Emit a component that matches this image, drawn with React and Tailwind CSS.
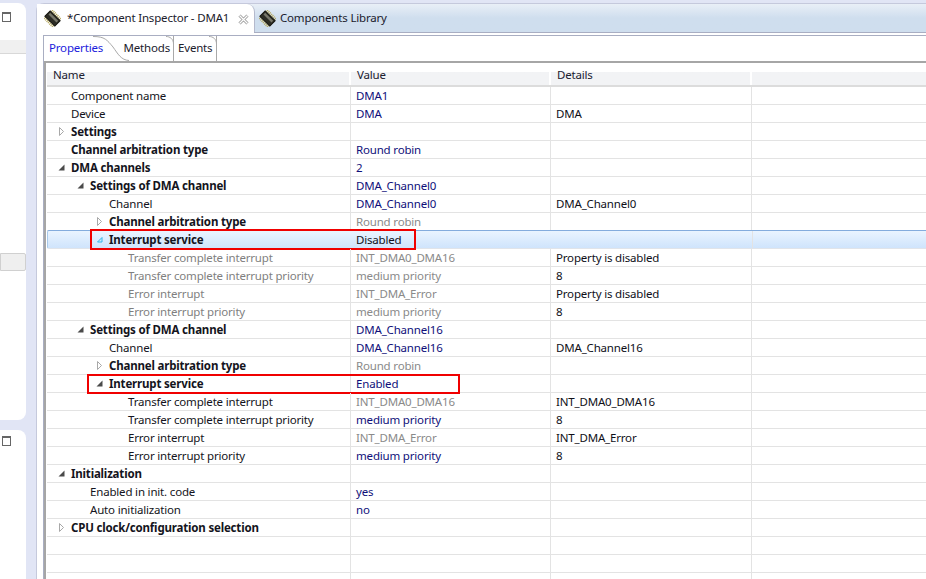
const NAVY = "text-[#10107a]";
const GREY = "text-[#8a8a8a]";
const rows = [
  { n: "Component name", i: 71, v: "DMA1", vc: NAVY },
  { n: "Device", i: 71, v: "DMA", vc: NAVY, d: "DMA" },
  { n: "Settings", i: 71, b: 1, a: "r", ax: 58 },
  { n: "Channel arbitration type", i: 71, b: 1, v: "Round robin", vc: NAVY },
  { n: "DMA channels", i: 71, b: 1, a: "d", ax: 58, v: "2", vc: NAVY },
  { n: "Settings of DMA channel", i: 90, b: 1, a: "d", ax: 77, v: "DMA_Channel0", vc: NAVY },
  { n: "Channel", i: 109, v: "DMA_Channel0", vc: NAVY, d: "DMA_Channel0" },
  { n: "Channel arbitration type", i: 109, b: 1, a: "r", ax: 96, v: "Round robin", vc: GREY },
  { n: "Interrupt service", i: 108, b: 1, a: "s", ax: 95, v: "Disabled", vc: "text-[#101018]", sel: 1, box: "left-[42px] w-[326px] top-[-2px] h-[21px]" },
  { n: "Transfer complete interrupt", i: 128, g: 1, v: "INT_DMA0_DMA16", vc: GREY, d: "Property is disabled" },
  { n: "Transfer complete interrupt priority", i: 128, g: 1, v: "medium priority", vc: GREY, d: "8" },
  { n: "Error interrupt", i: 128, g: 1, v: "INT_DMA_Error", vc: GREY, d: "Property is disabled" },
  { n: "Error interrupt priority", i: 128, g: 1, v: "medium priority", vc: GREY, d: "8" },
  { n: "Settings of DMA channel", i: 90, b: 1, a: "d", ax: 77, v: "DMA_Channel16", vc: NAVY },
  { n: "Channel", i: 109, v: "DMA_Channel16", vc: NAVY, d: "DMA_Channel16" },
  { n: "Channel arbitration type", i: 109, b: 1, a: "r", ax: 96, v: "Round robin", vc: GREY },
  { n: "Interrupt service", i: 109, b: 1, a: "d", ax: 96, v: "Enabled", vc: NAVY, box: "left-[40px] w-[373px] top-[-1px] h-[20px]" },
  { n: "Transfer complete interrupt", i: 128, v: "INT_DMA0_DMA16", vc: GREY, d: "INT_DMA0_DMA16" },
  { n: "Transfer complete interrupt priority", i: 128, v: "medium priority", vc: NAVY, d: "8" },
  { n: "Error interrupt", i: 128, v: "INT_DMA_Error", vc: GREY, d: "INT_DMA_Error" },
  { n: "Error interrupt priority", i: 128, v: "medium priority", vc: NAVY, d: "8" },
  { n: "Initialization", i: 71, b: 1, a: "d", ax: 58 },
  { n: "Enabled in init. code", i: 90, v: "yes", vc: NAVY },
  { n: "Auto initialization", i: 90, v: "no", vc: NAVY },
  { n: "CPU clock/configuration selection", i: 71, b: 1, a: "r", ax: 58 },
  { n: "" },
  { n: "" },
  { n: "" },
];

function Arrow({ kind }) {
  if (kind === "r")
    return (
      <svg width="7" height="9" viewBox="0 0 7 9" className="block">
        <path d="M1.5.5 L1.5 8.5 L5.5 4.5 Z" fill="#fff" stroke="#a8a8a8" />
      </svg>
    );
  return (
    <svg width="7" height="9" viewBox="0 0 7 9" className="block">
      {kind === "s" ? (
        <path d="M6 2.5 L6 7 L1.5 7 Z" fill="#c8ecfb" stroke="#35b4ea" />
      ) : (
        <path d="M6.5 1.5 L6.5 7.5 L.5 7.5 Z" fill="#4a4a4a" />
      )}
    </svg>
  );
}

function Chip() {
  return (
    <svg width="17" height="17" viewBox="0 0 18 18" className="shrink-0">
      <g transform="rotate(45 9 9)">
        <path d="M3 2V16M5 2V16M7 2V16M9 2V16M11 2V16M13 2V16M15 2V16" stroke="#b5a860" strokeWidth="1.1" />
        <rect x="1.5" y="5" width="15" height="8" fill="#2c2c24" stroke="#15150f" />
        <rect x="3" y="6.5" width="12" height="2.5" fill="#77776a" />
      </g>
    </svg>
  );
}

function Corner() {
  return (
    <svg width="8" height="8" viewBox="0 0 8 8" className="absolute right-[-1px] top-0">
      <path d="M0 .5 C4 .5 7.5 3 7.5 8" fill="none" stroke="#a9a9a9" />
    </svg>
  );
}

function Row({ r }) {
  return (
    <div
      className={
        "relative flex shrink-0 " +
        (r.sel
          ? "-mt-px h-[19px] rounded-l-[2px] border-t border-l border-b border-t-[#84acdd] border-l-[#a9c9ea] border-b-[#e0e4ea] bg-gradient-to-b from-[#eaf4ff] to-[#cfe4fc]"
          : "h-[18px] border-b border-[#e3e3e3]")
      }
    >
      <div
        className={
          "relative w-[304px] shrink-0 leading-[17px] whitespace-nowrap " +
          (r.sel ? "" : "border-r border-[#e3e3e3] ") +
          (r.g ? "text-[#7f7f7f] " : "text-[#141420] ") +
          (r.b ? "font-bold" : "")
        }
      >
        {r.a && (
          <span className="absolute top-[4px]" style={{ left: r.ax - 47 }}>
            <Arrow kind={r.a} />
          </span>
        )}
        <span className="block" style={{ paddingLeft: (r.i || 47) - 47 }}>{r.n}</span>
      </div>
      <div className={"w-[200px] shrink-0 leading-[17px] whitespace-nowrap " + (r.sel ? "pl-[4px] " : "pl-[5px] border-r border-[#e3e3e3] ") + (r.vc || "")}>
        {r.v}
      </div>
      <div className={"w-[201px] shrink-0 border-r border-[#e3e3e3] pl-[5px] leading-[17px] whitespace-nowrap text-[#101018]"}>
        {r.d}
      </div>
      {r.box && <div className={"absolute border-2 border-[#f00000] " + r.box} />}
    </div>
  );
}

function HeaderCell({ w, children }) {
  return (
    <div className={"flex h-full items-center border-r-2 border-white pl-[6px] pt-[2px] text-[#202030] " + w}>{children}</div>
  );
}

function SidePanel({ className, children }) {
  return <div className={"relative w-[26px] bg-white overflow-hidden " + className}>{children}</div>;
}

function WinIcon() {
  return (
    <div className="absolute left-[2px] w-[9px] h-[10px] border border-[#666] border-t-2" />
  );
}

export default function App() {
  return (
    <div
      className="flex w-[926px] h-[579px] overflow-hidden bg-[#e1e5f5] text-[11.5px] tracking-[-0.18px]"
      style={{ fontFamily: '"Noto Sans", sans-serif' }}
    >
      <div className="flex w-[36px] shrink-0 flex-col pr-[10px]">
        <SidePanel className="h-[419px] mt-[3px] rounded-br-[8px] rounded-tr-[8px]">
          <div className="absolute top-[9px] left-0 right-0"><WinIcon /></div>
          <div className="mt-[37px] h-[14px] border-b border-[#d8d8d8] bg-[#f0f0f0]" />
          <div className="mt-[199px] h-[18px] border border-[#d0d0d0] bg-[#efefef] rounded-r-[2px]" />
        </SidePanel>
        <SidePanel className="mt-[10px] h-[150px] rounded-tr-[8px]">
          <div className="relative h-[20px]">
            <div className="absolute top-[6px] left-0 right-0"><WinIcon /></div>
          </div>
        </SidePanel>
      </div>

      <div className="mt-[3px] flex min-w-0 flex-1 flex-col border-l border-t border-[#c5c9dc] bg-white rounded-tl-[8px]">
        <div className="flex h-[29px] shrink-0 border-b border-[#a9aec2]">
          <div className="relative z-10 flex w-[218px] shrink-0 items-center gap-[6px] rounded-tr-[8px] border-r border-[#b4b9cc] bg-white pl-[7px] text-[#20202c]">
            <Chip />
            <span className="whitespace-nowrap">*Component Inspector - DMA1</span>
            <svg width="11" height="11" viewBox="0 0 11 11" className="absolute left-[201px] top-[10px]">
              <path d="M1.5 1.5 L9.5 9.5 M9.5 1.5 L1.5 9.5" stroke="#9a9a9a" strokeWidth="3" />
              <path d="M1.5 1.5 L9.5 9.5 M9.5 1.5 L1.5 9.5" stroke="#fff" strokeWidth="1.2" />
            </svg>
            <div className="absolute left-0 right-0 bottom-[-1px] h-px bg-white" />
          </div>
          <div className="-ml-[10px] flex flex-1 items-center gap-[4px] bg-gradient-to-b from-[#e9eff7] via-[#cfdeee] to-[#cfdeee] pl-[14px] text-[#20202c]">
            <Chip />
            <span className="whitespace-nowrap">Components Library</span>
          </div>
        </div>

        <div className="mt-[2px] ml-[6px] flex min-h-0 flex-1 flex-col border-l border-t border-[#a9aec2]">
          <div className="flex h-[25px] shrink-0 items-end pl-px">
            <div className="relative flex h-[25px] w-[78px] items-center pl-[4px] pb-[2px] text-[#1c1cdc]">
              Properties
              <svg width="36" height="25" viewBox="0 0 36 25" className="absolute right-[-6px] top-0">
                <path d="M0 .5 C12 .5 14 4 20 11 C25 18 28 24 36 24.5" fill="none" stroke="#a9a9a9" />
              </svg>
            </div>
            <div className="relative flex h-[25px] w-[51px] items-center justify-end border-r border-[#a9a9a9] pb-[2px] pr-[3px] text-[#20202c]">
              Methods
              <Corner />
            </div>
            <div className="relative flex h-[25px] w-[43px] items-center border-r border-[#a9a9a9] pb-[2px] pl-[4px] text-[#20202c]">
              Events
              <Corner />
            </div>
          </div>

          <div className="flex min-h-0 flex-1 flex-col overflow-hidden border-l-2 border-t-2 border-[#a6a6a6] pl-px">
            <div className="flex h-[24px] shrink-0 border-b-2 border-[#dcdcdc] bg-gradient-to-b from-white from-40% to-[#f2f3f5] to-40%">
              <HeaderCell w="w-[304px]">Name</HeaderCell>
              <HeaderCell w="w-[200px]">Value</HeaderCell>
              <HeaderCell w="w-[201px]">Details</HeaderCell>
              <div className="flex-1" />
            </div>
            {rows.map((r, i) => (
              <Row key={i} r={r} />
            ))}
          </div>
        </div>
      </div>
    </div>
  );
}
